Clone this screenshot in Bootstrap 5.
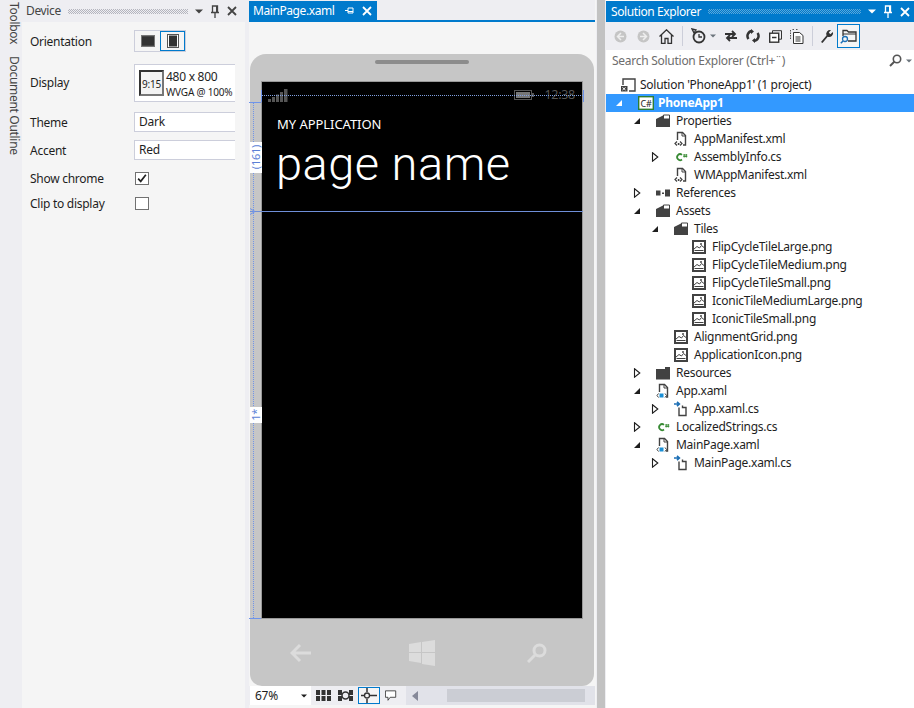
<!DOCTYPE html>
<html lang="en">
<head>
<meta charset="utf-8">
<title>Phone designer</title>
<link href="https://cdn.jsdelivr.net/npm/bootstrap@5.3.0/dist/css/bootstrap.min.css" rel="stylesheet">
<style>
html,body{height:100%;margin:0;overflow:hidden}
body{background:#eeeef2;font-family:"Noto Sans","Open Sans",sans-serif;font-size:12px;line-height:16px;color:#1e1e1e;letter-spacing:-.27px}
.shell{height:708px;width:914px}
svg{display:block;flex:none}
.rail{width:22px;flex:none;padding-top:2px;gap:12px;color:#444;letter-spacing:-.3px}
.rail span{writing-mode:vertical-rl;padding-left:1px}
.device{width:223px;flex:none;background:#f5f5f5}
.phead{height:22px;flex:none;padding-left:4px;padding-right:8px;gap:7px;background:#eeeef2;color:#444;letter-spacing:-.35px}
.grip{flex:1;height:5px;background:repeating-conic-gradient(#b4b5be 0 25%,transparent 0 50%) 0 0/2px 2px}
.device .phead{margin-bottom:8px}
.prow{padding-left:8px}
.prow .lab{width:104px;flex:none;padding-top:1px}
.prow label{width:104px;flex:none}
.r1{height:22px;margin-bottom:12px}
.r2{height:38px;margin-bottom:10px}
.r2 .lab{padding-top:0}
.r3{height:20px;margin-bottom:8px}
.r4{height:13px;margin:4px 0 8px}
.seg{display:flex;border:1px solid #ccceDB;height:22px;width:52px;background:#f5f5f5}
.seg i{flex:1;display:flex;align-items:center;justify-content:center;border:1px solid transparent}
.seg i.on{border-color:#007acc}
.disp{width:101px;height:38px;border:1px solid #ccceDB;border-right:0;background:#fff;padding:4px;gap:2px;overflow:hidden;white-space:nowrap}
.thumb{width:25px;height:26px;border:2px solid #777;border-top-color:#333;border-left-color:#333;font-size:10px;line-height:24px;text-align:center;background:#f3f3f3;flex:none;margin-top:1px}
.disp small{display:block;font-size:10px;line-height:13px;letter-spacing:-.2px;margin-top:1px}
.txt{width:101px;height:20px;border:1px solid #ccceDB;border-right:0;background:#fff;padding-left:4px;line-height:18px}
.chk.form-check-input{width:14px;height:13px;margin:0 0 0 1px;border:1px solid #717171;border-radius:0;background-color:#fff;box-shadow:none}
.chk.form-check-input:checked{background-color:#fff;border-color:#717171;background-image:url("data:image/svg+xml,%3Csvg xmlns='http://www.w3.org/2000/svg' viewBox='0 0 14 14'%3E%3Cpath d='M2.500 7l3 3 6-7.500' fill='none' stroke='%23222' stroke-width='2'/%3E%3C/svg%3E");background-size:100%}
.split1{width:4px;flex:none}
.center{width:347px;flex:none;background:#f5f5f5;position:relative;border-right:1px solid #f5f5f5}
.tabs{height:22px;flex:none;background:#eeeef2;border-bottom:2px solid #007acc;padding-top:1px}
.tab{width:128px;height:19px;background:#007acc;color:#fff;padding:0 5px 0 4px;gap:8px;letter-spacing:-.42px}
.stage{flex:none;height:664px;padding:32px 1px 0}
.phone{width:344px;height:632px;background:#c6c6c6;border-radius:16px 16px 12px 12px;padding-top:6px}
.speaker{width:94px;height:4px;border-radius:2px;background:#8c8c8c;flex:none}
.screen{margin:17px 11px 0;height:538px;background:#000;border:1px solid #999;color:#fff}
.status{height:21px;padding:4px 7px 0 6px;color:#555}
.status .time{font-size:12.500px;margin-left:10px}
.appt{margin:12px 0 0 15px;font-size:13px;line-height:18px;letter-spacing:-.05px}
.pname{margin:1px 0 0 14px;font-family:Roboto,sans-serif;font-weight:300;font-size:47px;line-height:60px;letter-spacing:.5px}
.navs{flex:1;padding:0 47px 0 40px}
.dbar{height:19px;flex:none;background:#eeeef2;padding-left:1px}
.combo{width:62px;height:19px;background:#fff;padding:0 4px 0 5px;flex:none;border-right:1px solid #eeeef2}
.tool{width:22px;height:17px;display:flex;align-items:center;justify-content:center;flex:none;border:1px solid transparent}
.tool.on{border-color:#007acc;background:#f5f5f5;margin-left:2px}
.scroll{flex:1;height:19px;background:#e1e2e9;margin-left:4px;padding:0 10px 0 6px}
.thumbbar{height:13px;width:138px;background:#cbcdd4;margin-left:auto}
.split2{width:8px;margin-left:1px;flex:none;background:#c2c2c2}
.split3{width:1px;flex:none}
.sol{flex:1;background:#fff;min-width:0}
.sol .phead{height:21px;background:#007acc;color:#fff;margin-top:1px;padding-left:5px;gap:7px;padding-right:4px;letter-spacing:-.4px}
.sol .grip{background-image:repeating-conic-gradient(#59a8dc 0 25%,transparent 0 50%)}
.tb{height:28px;flex:none;background:#eeeef2;padding-left:3px;padding-right:0}
.tb .b{width:23px;height:24px;display:flex;align-items:center;justify-content:center;border:1px solid transparent;flex:none}
.tb .b.n{width:22px}
.tb .b.w{width:20px}
.tb .b.on{border-color:#007acc;width:23px;background:#f5f5f5}
.sep{width:1px;height:20px;background:#ccced9;flex:none;margin:0 4px}
.search{height:21px;flex:none;background:#fff;padding:0 2px 0 6px;color:#6d6d6d;margin-bottom:5px}
.tree{list-style:none;margin:0;padding:0}
.tree li{height:18px;display:flex;align-items:center;white-space:nowrap}
.l0{padding-left:14px}.l1{padding-left:4px}.l2{padding-left:22px}.l3{padding-left:40px}.l4{padding-left:58px}
.x{width:28px;flex:none;display:block}
.x svg{margin-left:5px}
.ic{width:20px;flex:none;display:block}
.tree li.sel{background:#3399ff;color:#fff;font-weight:700}
.guide{position:absolute;pointer-events:none}
.gh{left:12px;width:322px;top:95px;height:1px;border-top:1px dotted #7f9fe0}
.gs{left:1px;width:333px;top:211px;height:1px;background:#6f8fd8}
.gv{left:4px;top:102px;height:516px;width:1px;border-left:1px dotted #6f94ea}
.t1{left:0;width:12px;top:102px;height:1px;background:#6f94ea}
.t2{left:0;width:12px;top:618px;height:1px;background:#6f94ea}
.t3{left:12px;top:90px;height:12px;width:1px;background:#6f94ea}
.t4{left:334px;top:90px;height:12px;width:1px;background:#6f94ea}
.t5{left:0;top:208px}
.lbl{position:absolute;left:1px;width:12px;background:#fff;color:#5b7fd6;display:flex;align-items:center;justify-content:center;font-size:11px}
.lbl span{writing-mode:vertical-rl;transform:rotate(180deg)}
.lbl161{top:142px;height:31px}
.lbl1{top:407px;height:16px}
</style>
</head>
<body>
<svg width="0" height="0" class="position-absolute">
<defs>
<symbol id="folder" viewBox="0 0 14 14"><path d="M0 5 7 1.500V5h7v8H0z" fill="#424242"/><path d="M7.500 1h6v4h-6z" fill="#fff" stroke="#424242"/></symbol>
<symbol id="xml" viewBox="0 0 14 16"><path d="M3.500 9V1.500h5l3 3V14H9" fill="none" stroke="#424242" stroke-width="1.400"/><path d="M8 1.500v3.500h3.500" fill="none" stroke="#424242"/><path d="M3 10.500 1 12.500l2 2M6 10.500l2 2-2 2" fill="none" stroke="#424242" stroke-width="1.200"/><rect x="3.800" y="12" width="1.600" height="2" fill="#424242"/></symbol>
<symbol id="xaml" viewBox="0 0 14 16"><path d="M3.500 9V1.500h5l3 3V14H10" fill="none" stroke="#424242" stroke-width="1.400"/><path d="M8 1.500v3.500h3.500" fill="none" stroke="#424242"/><path d="M2.500 10.500 1 12.500l1.500 2M9 10.500l1.500 2-1.500 2" fill="none" stroke="#424242"/><rect x="3.500" y="10.500" width="4" height="4" fill="#1a8fd6"/></symbol>
<symbol id="cs" viewBox="0 0 16 16"><path d="M8 5.800A3 3 0 1 0 8 10.500" fill="none" stroke="#388a34" stroke-width="1.700"/><path d="M10.200 5v3.500M12.300 5v3.500M9.300 6h4M9.300 7.500h4" stroke="#388a34" stroke-width=".9"/></symbol>
<symbol id="img" viewBox="0 0 14 14"><rect x="1" y="1" width="12" height="12" fill="#fff" stroke="#424242" stroke-width="2"/><path d="M2 9l3-2.500 2.500 1.500 2-2.500 2.500 2M2.500 10.500h9" fill="none" stroke="#424242"/><rect x="8" y="3" width="2" height="2" fill="#777"/></symbol>
<symbol id="code" viewBox="0 0 14 16"><path d="M5 6.500V14.500H12V6.500H8.500V4.500" fill="none" stroke="#424242" stroke-width="1.400"/><path d="M0 3h5M3 .8 5.400 3 3 5.200" fill="none" stroke="#1c6fb5" stroke-width="1.600"/></symbol>
<symbol id="open" viewBox="0 0 8 8"><path d="M7 1v6H1z" fill="#1e1e1e"/></symbol>
<symbol id="openw" viewBox="0 0 8 8"><path d="M7 1v6H1z" fill="#fff"/></symbol>
<symbol id="closed" viewBox="0 0 8 10"><path d="M1.500 .8 6.800 5 1.500 9.200z" fill="#fff" stroke="#1e1e1e" stroke-width="1.100"/></symbol>
<symbol id="pinv" viewBox="0 0 10 13"><path d="M2.500 1h5v6.500h-5zM1 7.500h8M5 7.500V13" fill="none" stroke="currentColor" stroke-width="1.300"/><path d="M6 1h1.500v6.500H6z" fill="currentColor"/></symbol>
<symbol id="cross" viewBox="0 0 10 10"><path d="M1 1l8 8M9 1 1 9" stroke="currentColor" stroke-width="1.800"/></symbol>
<symbol id="down" viewBox="0 0 8 5"><path d="M0 .5h8L4 4.500z" fill="currentColor"/></symbol>
</defs>
</svg>
<div class="shell d-flex">
  <div class="rail d-flex flex-column"><span>Toolbox</span><span>Document Outline</span></div>

  <section class="device d-flex flex-column">
    <div class="phead d-flex align-items-center"><span>Device</span><div class="grip"></div>
      <svg width="8" height="5"><use href="#down"/></svg>
      <svg width="10" height="13"><use href="#pinv"/></svg>
      <svg width="10" height="10"><use href="#cross"/></svg></div>
    <div class="prow r1 d-flex align-items-center"><span class="lab">Orientation</span>
      <div class="seg"><i><svg width="14" height="12"><rect x=".5" y=".5" width="13" height="11" fill="#444" stroke="#777"/><rect x="1" y="2" width="12" height="8" fill="#333"/></svg></i><i class="on"><svg width="12" height="14"><rect x=".5" y=".5" width="11" height="13" fill="#fff" stroke="#555"/><rect x="2" y="1.500" width="8" height="11" fill="#333"/></svg></i></div></div>
    <div class="prow r2 d-flex align-items-center"><span class="lab">Display</span>
      <div class="disp d-flex"><div class="thumb">9:15</div><div><div>480 x 800</div><small>WVGA @ 100%</small></div></div></div>
    <div class="prow r3 d-flex align-items-center"><span class="lab">Theme</span><div class="txt">Dark</div></div>
    <div class="prow r3 d-flex align-items-center"><span class="lab">Accent</span><div class="txt">Red</div></div>
    <div class="prow r4 d-flex align-items-center"><label for="c1">Show chrome</label><input id="c1" class="form-check-input chk" type="checkbox" checked></div>
    <div class="prow r4 d-flex align-items-center"><label for="c2">Clip to display</label><input id="c2" class="form-check-input chk" type="checkbox"></div>
  </section>
  <div class="split1"></div>

  <main class="center d-flex flex-column">
    <div class="tabs"><div class="tab d-flex align-items-center"><span class="flex-grow-1">MainPage.xaml</span>
      <svg width="9" height="9" viewBox="0 0 9 9"><path d="M0 4.500h3M3 2v5M3 2h5v5H3M3 5.500h5" fill="none" stroke="#fff"/></svg>
      <svg width="10" height="10" class="text-white"><use href="#cross"/></svg></div></div>
    <div class="stage">
      <div class="phone d-flex flex-column align-items-center">
        <div class="speaker"></div>
        <div class="screen align-self-stretch">
          <div class="status d-flex align-items-center">
            <svg width="20" height="14" viewBox="0 0 20 14"><path d="M0 11h3v3H0zM4 9h3v5H4zM8 6.500h3V14H8zM12 4h3v10h-3zM16 1h3.500v13H16z" fill="#555"/></svg>
            <svg class="ms-auto" width="20" height="10" viewBox="0 0 20 10"><rect x=".5" y=".5" width="17" height="9" fill="none" stroke="#555"/><rect x="2" y="2" width="14" height="6" fill="#777"/><rect x="18" y="3" width="2" height="4" fill="#555"/></svg>
            <span class="time">12:38</span>
          </div>
          <div class="appt">MY APPLICATION</div>
          <h1 class="pname">page name</h1>
        </div>
        <div class="navs d-flex align-items-center justify-content-between align-self-stretch">
          <svg width="22" height="20" viewBox="0 0 22 20"><path d="M10 2 2 10l8 8M2 10h19" fill="none" stroke="#dcdcdc" stroke-width="3"/></svg>
          <svg class="ms-1" width="26" height="26" viewBox="0 0 26 26"><path d="M0 4 12 2v10H0zM13 2l13-2v12H13zM0 13h12v10L0 21zM13 13h13v13l-13-2z" fill="#dcdcdc"/></svg>
          <svg width="20" height="20" viewBox="0 0 20 20"><circle cx="12.500" cy="7.500" r="5.500" fill="none" stroke="#dcdcdc" stroke-width="3"/><path d="M8 12 1 19" stroke="#dcdcdc" stroke-width="3"/></svg>
        </div>
      </div>
    </div>
    <div class="dbar d-flex align-items-center">
      <div class="combo d-flex align-items-center justify-content-between"><span>67%</span><svg width="6" height="4"><use href="#down"/></svg></div>
      <span class="tool"><svg width="15" height="11" viewBox="0 0 15 11"><path d="M0 0h4v5H0zM5.500 0h4v5h-4zM11 0h4v5h-4zM0 6h4v5H0zM5.500 6h4v5h-4zM11 6h4v5h-4z" fill="#333"/></svg></span>
      <span class="tool"><svg width="15" height="11" viewBox="0 0 15 11"><path d="M0 0h4v5H0zM11 0h4v5h-4zM0 6h4v5H0zM11 6h4v5h-4z" fill="#333"/><circle cx="7.500" cy="5.500" r="3.500" fill="none" stroke="#333" stroke-width="1.500"/></svg></span>
      <span class="tool on"><svg width="16" height="15" viewBox="0 0 16 15"><circle cx="6" cy="7.500" r="2.500" fill="none" stroke="#333" stroke-width="1.300"/><path d="M6 0v4M6 11v4M0 7.500h3M9 7.500h7" stroke="#333" stroke-width="1.500"/></svg></span>
      <span class="tool"><svg width="12" height="12" viewBox="0 0 14 14"><path d="M.5 1h12v7.500H6L3.500 12V8.500h-3z" fill="#fff" stroke="#333"/></svg></span>
      <div class="scroll d-flex align-items-center"><svg width="6" height="10" viewBox="0 0 6 10"><path d="M6 0v10L0 5z" fill="#868999"/></svg><div class="thumbbar"></div></div>
    </div>
    <div class="guide gh"></div><div class="guide gs"></div><div class="guide gv"></div>
    <div class="guide t1"></div><div class="guide t2"></div><div class="guide t3"></div><div class="guide t4"></div>
    <svg class="guide t5" width="7" height="7" viewBox="0 0 7 7"><path d="M1 .5 6 3.500 1 6.500" fill="none" stroke="#6f94ea"/></svg>
    <div class="lbl lbl161"><span>(161)</span></div>
    <div class="lbl lbl1"><span>1*</span></div>
  </main>
  <div class="split2"></div>
  <div class="split3"></div>

  <aside class="sol d-flex flex-column">
    <div class="phead d-flex align-items-center"><span>Solution Explorer</span><div class="grip"></div>
      <svg width="8" height="5"><use href="#down"/></svg>
      <svg width="10" height="13"><use href="#pinv"/></svg>
      <svg width="10" height="10"><use href="#cross"/></svg></div>
    <div class="tb d-flex align-items-center">
      <span class="b"><svg width="13" height="13" viewBox="0 0 13 13"><circle cx="6.500" cy="6.500" r="6" fill="#c5c5c5"/><path d="M7 3 3.500 6.500 7 10M4 6.500h6" fill="none" stroke="#eee" stroke-width="1.500"/></svg></span>
      <span class="b"><svg width="13" height="13" viewBox="0 0 13 13"><circle cx="6.500" cy="6.500" r="6" fill="#c5c5c5"/><path d="M6 3l3.500 3.500L6 10M9 6.500H3" fill="none" stroke="#eee" stroke-width="1.500"/></svg></span>
      <span class="b"><svg width="15" height="15" viewBox="0 0 15 15"><path d="M.5 7.500 7.500 .8l7 6.700M2.500 6v8.500h3.500V9.500h3v5h3.500V6" fill="none" stroke="#333" stroke-width="1.300"/></svg></span>
      <span class="sep"></span>
      <span class="b"><svg width="16" height="16" viewBox="0 0 16 16"><circle cx="8" cy="9" r="5.500" fill="none" stroke="#333" stroke-width="1.800"/><path d="M8 6v3h3M1 1l4 1-2 3z" fill="none" stroke="#333" stroke-width="1.300"/></svg></span>
      <svg width="6" height="4" class="text-secondary"><use href="#down"/></svg>
      <span class="b n ms-1"><svg width="14" height="12" viewBox="0 0 14 12"><path d="M1 4h10M8 1l3 3-3 3M13 8H3M6 5 3 8l3 3" fill="none" stroke="#333" stroke-width="1.800"/></svg></span>
      <span class="b n"><svg width="14" height="14" viewBox="0 0 14 14"><path d="M2.500 10A5 5 0 0 1 6 2M11.500 4A5 5 0 0 1 8 12" fill="none" stroke="#333" stroke-width="2.500"/><path d="M5 0v5l3-2.500zM9 14V9l-3 2.500z" fill="#333"/></svg></span>
      <span class="b n"><svg width="13" height="13" viewBox="0 0 13 13"><path d="M3.500 3V.7h9v8.500H10" fill="none" stroke="#333"/><rect x=".7" y="3.200" width="9" height="9" fill="#fff" stroke="#333" stroke-width="1.400"/><path d="M3 7.500h4.500" stroke="#333" stroke-width="1.500"/></svg></span>
      <span class="b n"><svg width="14" height="15" viewBox="0 0 14 15"><path d="M.5 10V.5M2.500.5h2M6 .5h2" fill="none" stroke="#555" stroke-dasharray="1.500 1"/><path d="M3.500 3.500h6l3.500 3v8h-9.500z" fill="#fff" stroke="#333"/><path d="M5.500 8h5M5.500 10h5M5.500 12h5" stroke="#333"/></svg></span>
      <span class="sep"></span>
      <span class="b w"><svg width="14" height="14" viewBox="0 0 14 14"><path d="M1 13 6.500 6.500A4 4 0 0 1 11 1L8.800 3.500l1.500 1.700L13 3a4 4 0 0 1-5.300 4.800L2.500 14z" fill="#333"/></svg></span>
      <span class="b on"><svg width="17" height="15" viewBox="0 0 17 15"><path d="M3 7V1.500h4l1.500 1.500h7.500v9H8" fill="none" stroke="#333" stroke-width="1.300"/><path d="M3 5h13" stroke="#333"/><circle cx="5" cy="10" r="2.500" fill="none" stroke="#1c6fb5" stroke-width="1.300"/><path d="M3 12 .8 14.300" stroke="#1c6fb5" stroke-width="1.500"/></svg></span>
    </div>
    <div class="search d-flex align-items-center"><span class="flex-grow-1">Search Solution Explorer (Ctrl+¨)</span>
      <svg width="13" height="13" viewBox="0 0 13 13"><circle cx="8" cy="5" r="3.700" fill="none" stroke="#555" stroke-width="1.600"/><path d="M5.500 7.500 1 12" stroke="#555" stroke-width="2"/></svg>
      <svg class="ms-1 text-secondary" width="6" height="4"><use href="#down"/></svg></div>
    <ul class="tree">
      <li class="l0"><span class="ic"><svg width="17" height="14" viewBox="0 0 17 14"><path d="M3 7V1h12v12H9" fill="none" stroke="#424242" stroke-width="1.400"/><path d="M1 8h6.500v5.500H1z" fill="#424242"/><path d="M2.500 9.500l3 2.500M5.500 9.500l-3 2.500" stroke="#fff"/></svg></span><span>Solution 'PhoneApp1' (1 project)</span></li>
      <li class="l1 sel"><span class="x"><svg width="8" height="8"><use href="#openw"/></svg></span><span class="ic"><svg width="16" height="14" viewBox="0 0 16 14"><rect x=".7" y=".7" width="14.600" height="12.600" fill="#fff" stroke="#2e7d32" stroke-width="1.400"/><text x="8" y="10.500" text-anchor="middle" font-size="9" font-weight="400" fill="#222" font-family="Noto Sans">C#</text></svg></span><span>PhoneApp1</span></li>
      <li class="l2"><span class="x"><svg width="8" height="8"><use href="#open"/></svg></span><span class="ic"><svg width="14" height="14"><use href="#folder"/></svg></span><span>Properties</span></li>
      <li class="l3"><span class="x"></span><span class="ic"><svg width="14" height="16"><use href="#xml"/></svg></span><span>AppManifest.xml</span></li>
      <li class="l3"><span class="x"><svg width="8" height="10"><use href="#closed"/></svg></span><span class="ic"><svg width="16" height="16"><use href="#cs"/></svg></span><span>AssemblyInfo.cs</span></li>
      <li class="l3"><span class="x"></span><span class="ic"><svg width="14" height="16"><use href="#xml"/></svg></span><span>WMAppManifest.xml</span></li>
      <li class="l2"><span class="x"><svg width="8" height="10"><use href="#closed"/></svg></span><span class="ic"><svg width="14" height="8" viewBox="0 0 14 8"><path d="M0 1.500h4.500v5H0zM6 3.500h2v1.500H6zM9 .5h5v7H9z" fill="#424242"/></svg></span><span>References</span></li>
      <li class="l2"><span class="x"><svg width="8" height="8"><use href="#open"/></svg></span><span class="ic"><svg width="14" height="14"><use href="#folder"/></svg></span><span>Assets</span></li>
      <li class="l3"><span class="x"><svg width="8" height="8"><use href="#open"/></svg></span><span class="ic"><svg width="14" height="14"><use href="#folder"/></svg></span><span>Tiles</span></li>
      <li class="l4"><span class="x"></span><span class="ic"><svg width="14" height="14"><use href="#img"/></svg></span><span>FlipCycleTileLarge.png</span></li>
      <li class="l4"><span class="x"></span><span class="ic"><svg width="14" height="14"><use href="#img"/></svg></span><span>FlipCycleTileMedium.png</span></li>
      <li class="l4"><span class="x"></span><span class="ic"><svg width="14" height="14"><use href="#img"/></svg></span><span>FlipCycleTileSmall.png</span></li>
      <li class="l4"><span class="x"></span><span class="ic"><svg width="14" height="14"><use href="#img"/></svg></span><span>IconicTileMediumLarge.png</span></li>
      <li class="l4"><span class="x"></span><span class="ic"><svg width="14" height="14"><use href="#img"/></svg></span><span>IconicTileSmall.png</span></li>
      <li class="l3"><span class="x"></span><span class="ic"><svg width="14" height="14"><use href="#img"/></svg></span><span>AlignmentGrid.png</span></li>
      <li class="l3"><span class="x"></span><span class="ic"><svg width="14" height="14"><use href="#img"/></svg></span><span>ApplicationIcon.png</span></li>
      <li class="l2"><span class="x"><svg width="8" height="10"><use href="#closed"/></svg></span><span class="ic"><svg width="14" height="14" viewBox="0 0 14 14"><path d="M0 3h9V1h5v12.500H0z" fill="#424242"/></svg></span><span>Resources</span></li>
      <li class="l2"><span class="x"><svg width="8" height="8"><use href="#open"/></svg></span><span class="ic"><svg width="14" height="16"><use href="#xaml"/></svg></span><span>App.xaml</span></li>
      <li class="l3"><span class="x"><svg width="8" height="10"><use href="#closed"/></svg></span><span class="ic"><svg width="14" height="16"><use href="#code"/></svg></span><span>App.xaml.cs</span></li>
      <li class="l2"><span class="x"><svg width="8" height="10"><use href="#closed"/></svg></span><span class="ic"><svg width="16" height="16"><use href="#cs"/></svg></span><span>LocalizedStrings.cs</span></li>
      <li class="l2"><span class="x"><svg width="8" height="8"><use href="#open"/></svg></span><span class="ic"><svg width="14" height="16"><use href="#xaml"/></svg></span><span>MainPage.xaml</span></li>
      <li class="l3"><span class="x"><svg width="8" height="10"><use href="#closed"/></svg></span><span class="ic"><svg width="14" height="16"><use href="#code"/></svg></span><span>MainPage.xaml.cs</span></li>
    </ul>
  </aside>
</div>
<script src="https://cdn.jsdelivr.net/npm/bootstrap@5.3.0/dist/js/bootstrap.bundle.min.js"></script>
</body>
</html>
